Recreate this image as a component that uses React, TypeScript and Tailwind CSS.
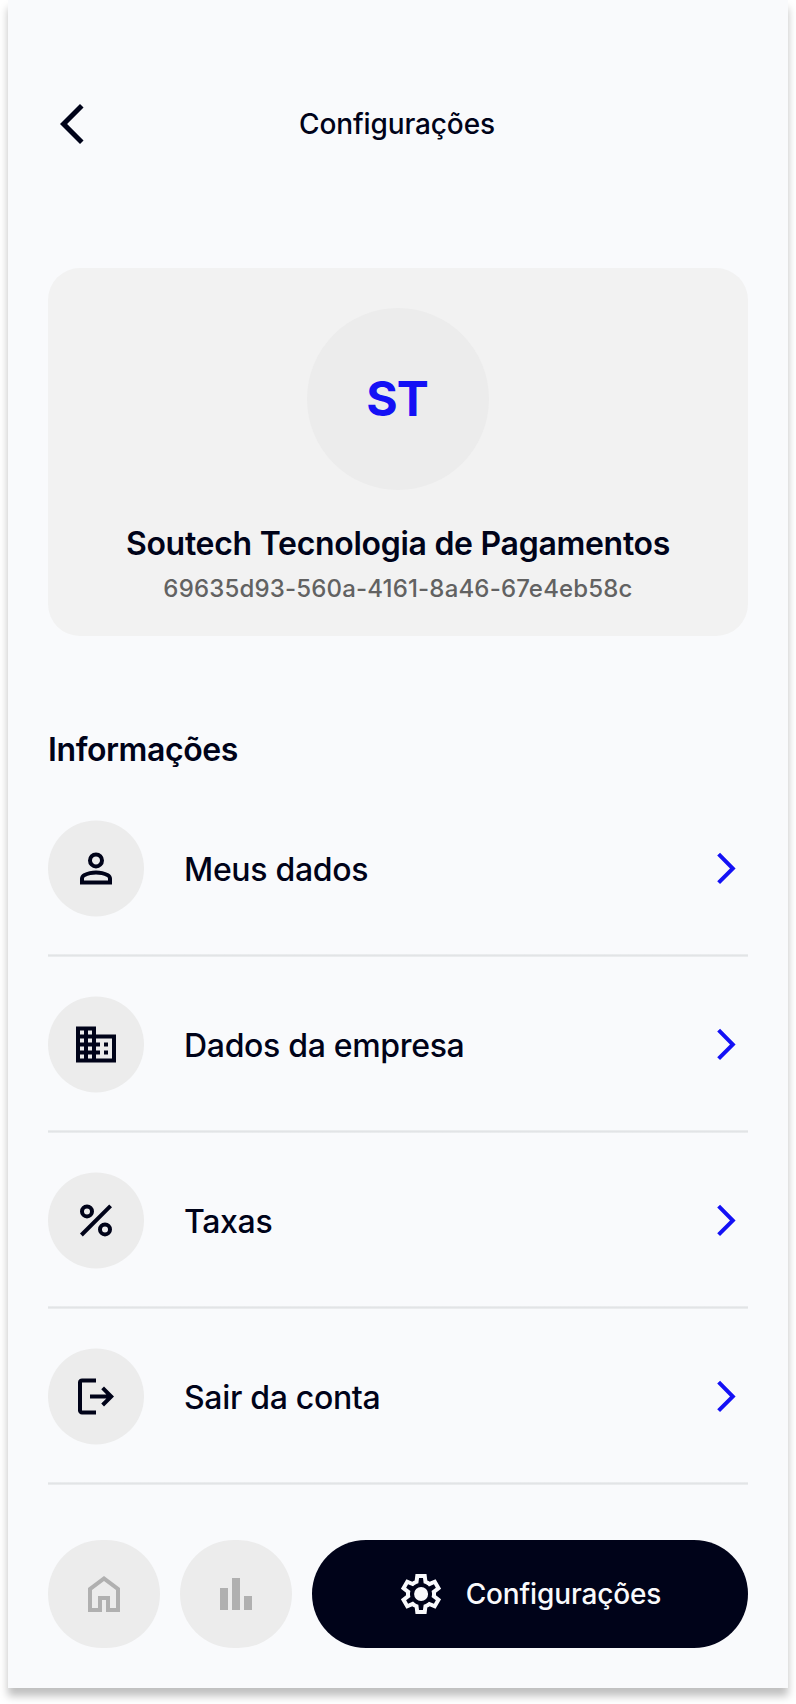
import type { ReactNode } from "react";

function Icon({ d, className = "" }: { d: string; className?: string }) {
  return (
    <svg viewBox="0 0 24 24" fill="currentColor" fillRule="evenodd" className={`size-12 shrink-0 ${className}`} aria-hidden="true">
      <path d={d} />
    </svg>
  );
}

const icons = {
  person:
    "M12 12q-1.65 0-2.825-1.175T8 8t1.175-2.825T12 4t2.825 1.175T16 8t-1.175 2.825T12 12m-8 8v-2.8q0-.85.438-1.562T5.6 14.55q1.55-.775 3.15-1.162T12 13t3.25.388t3.15 1.162q.725.375 1.163 1.088T20 17.2V20zm2-2h12v-.8q0-.275-.137-.5t-.363-.35q-1.35-.675-2.725-1.012T12 15t-2.775.338T6.5 16.35q-.225.125-.363.35T6 17.2zm6-8q.825 0 1.412-.587T14 8t-.587-1.412T12 6t-1.412.588T10 8t.588 1.413T12 10",
  business:
    "M12 7V3H2v18h20V7H12zM6 19H4v-2h2v2zm0-4H4v-2h2v2zm0-4H4V9h2v2zm0-4H4V5h2v2zm4 12H8v-2h2v2zm0-4H8v-2h2v2zm0-4H8V9h2v2zm0-4H8V5h2v2zm10 12h-8v-2h2v-2h-2v-2h2v-2h-2V9h8v10zm-2-8h-2v2h2v-2zm0 4h-2v2h2v-2z",
  percent:
    "M7.5 4a3.5 3.5 0 1 1 0 7a3.5 3.5 0 1 1 0-7zm0 2a1.5 1.5 0 1 0 0 3a1.5 1.5 0 1 0 0-3zM16.5 13a3.5 3.5 0 1 1 0 7a3.5 3.5 0 1 1 0-7zm0 2a1.5 1.5 0 1 0 0 3a1.5 1.5 0 1 0 0-3zM5.4 20L4 18.6L18.6 4L20 5.4z",
  logout:
    "M5 21q-.825 0-1.412-.587T3 19V5q0-.825.588-1.412T5 3h7v2H5v14h7v2zm11-4l-1.375-1.45l2.55-2.55H9v-2h8.175l-2.55-2.55L16 7l5 5z",
  home: "M6 19h3v-6h6v6h3v-9l-6-4.5L6 10zm-2 2V9l8-6l8 6v12h-7v-6h-2v6z",
  chart: "M16 20v-7h4v7zm-6 0V4h4v16zm-6 0V9h4v11z",
  settings:
    "M9.25 22l-.4-3.2q-.325-.125-.612-.3t-.563-.375L4.7 19.375l-2.75-4.75l2.575-1.95Q4.5 12.5 4.5 12.338v-.675q0-.163.025-.338L1.95 9.375l2.75-4.75l2.975 1.25q.275-.2.575-.375t.6-.3l.4-3.2h5.5l.4 3.2q.325.125.613.3t.562.375l2.975-1.25l2.75 4.75l-2.575 1.95q.025.175.025.338v.674q0 .163-.05.338l2.575 1.95l-2.75 4.75l-2.95-1.25q-.275.2-.575.375t-.6.3l-.4 3.2zM11 20h1.975l.35-2.65q.775-.2 1.438-.587t1.212-.938l2.475 1.025l.975-1.7l-2.15-1.625q.125-.35.175-.737T17.5 12t-.05-.787t-.175-.738l2.15-1.625l-.975-1.7l-2.475 1.05q-.55-.575-1.212-.962t-1.438-.588L13 4h-1.975l-.35 2.65q-.775.2-1.437.588t-1.213.937L5.55 7.15l-.975 1.7l2.15 1.6q-.125.375-.175.75t-.05.8q0 .4.05.775t.175.75l-2.15 1.625l.975 1.7l2.475-1.05q.55.575 1.213.963t1.437.587zM12.05 8.5a3.5 3.5 0 1 1 0 7a3.5 3.5 0 1 1 0-7z",
  back: "M10 22L0 12L10 2l1.775 1.775L3.55 12l8.225 8.225z",
  forward: "M8.025 19.8L6.6 18.4L13 12L6.6 5.6L8.025 4.2L15.8 12z",
};

function Row({ icon, label }: { icon: string; label: string }) {
  return (
    <li className="flex h-44 flex-col">
      <div className="flex h-24 translate-y-[0.4px] items-center">
        <span className="flex size-24 shrink-0 items-center justify-center rounded-full bg-[#ececec]">
          <Icon d={icon} />
        </span>
        <span className="ml-10 grow pt-1 text-[32px] leading-10 font-medium tracking-[-0.32px]">{label}</span>
        <Icon d={icons.forward} className="-mr-1 text-[#1411f5]" />
      </div>
      <div className="mt-[38px] h-[3px] bg-linear-to-b from-[#eef0f1] via-[#e2e4e6] to-[#eef0f1]" />
    </li>
  );
}

function TabButton({ children }: { children: ReactNode }) {
  return (
    <button className="flex h-27 w-28 items-center justify-center rounded-[54px] bg-[#ececec] text-[#b0b0b0]">{children}</button>
  );
}

export default function App() {
  return (
    <div className="h-[1704px] w-[796px] overflow-hidden bg-white px-2 font-['Inter',sans-serif] text-[#000319]">
      <main className="flex h-[1688px] flex-col bg-[#f9fafc] px-10 shadow-[0_8px_8px_rgba(0,0,0,0.25)]">
        <header className="mt-[100px] grid h-12 grid-cols-[1fr_auto_1fr] items-center pr-[2px]">
          <Icon d={icons.back} className="ml-3" />
          <h1 className="text-[28px] leading-9 font-medium tracking-[-0.12px]">Configurações</h1>
        </header>

        <section className="mt-[120px] flex h-[368px] flex-col items-center rounded-[32px] bg-[#f2f2f2] pt-10">
          <div className="flex size-[182px] items-center justify-center rounded-full bg-[#ececec] pr-[2px] text-5xl font-bold tracking-[-1px] text-[#1411f5]">
            ST
          </div>
          <h2 className="mt-[34px] text-[32px] leading-10 font-semibold tracking-[-0.29px]">Soutech Tecnologia de Pagamentos</h2>
          <p className="mt-[9px] text-2xl leading-8 font-medium tracking-[0.17px] text-[#626262]">69635d93-560a-4161-8a46-67e4eb58c</p>
        </section>

        <h2 className="mt-[94px] text-[32px] leading-10 font-semibold tracking-[-0.4px]">Informações</h2>
        <ul className="mt-[50px]">
          <Row icon={icons.person} label="Meus dados" />
          <Row icon={icons.business} label="Dados da empresa" />
          <Row icon={icons.percent} label="Taxas" />
          <Row icon={icons.logout} label="Sair da conta" />
        </ul>

        <nav className="mt-4 flex h-27 gap-5">
          <TabButton>
            <Icon d={icons.home} />
          </TabButton>
          <TabButton>
            <Icon d={icons.chart} />
          </TabButton>
          <button className="flex grow items-center justify-center gap-[21px] rounded-[54px] bg-[#000319] pr-[2px] text-[#f9fafc]">
            <Icon d={icons.settings} />
            <span className="text-[28px] leading-9 font-medium tracking-[-0.14px]">Configurações</span>
          </button>
        </nav>
      </main>
    </div>
  );
}
